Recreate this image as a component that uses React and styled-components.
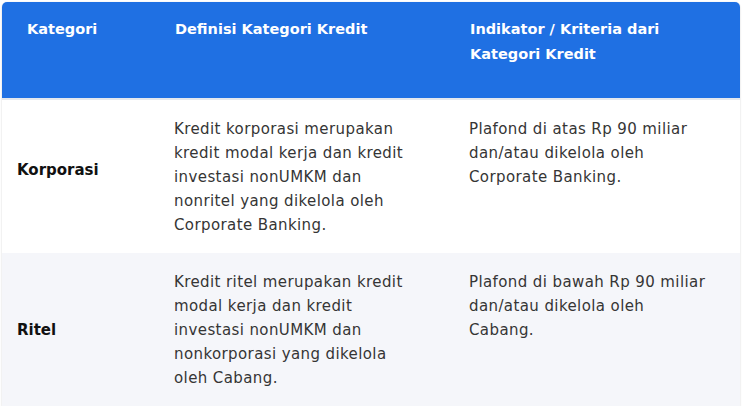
import React from "react";
import styled, { createGlobalStyle } from "styled-components";

const GlobalStyle = createGlobalStyle`
  body {
    margin: 0;
    background: #ffffff;
    font-family: "DejaVu Sans", "Open Sans", sans-serif;
  }
  *, *::before, *::after {
    box-sizing: border-box;
  }
`;

const Page = styled.div`
  padding: 2px 5px 0 2px;
`;

const Card = styled.div`
  border-radius: 5px 5px 0 0;
  overflow: hidden;
  box-shadow: 0 1px 2px rgba(0, 0, 0, 0.16), 0 0 1px rgba(0, 0, 0, 0.12);
`;

const Table = styled.table`
  width: 100%;
  border-collapse: collapse;
  table-layout: fixed;
`;

const HeadCell = styled.th`
  background: #1f70e3;
  color: #ffffff;
  font-size: 14.5px;
  font-weight: 700;
  line-height: 25px;
  text-align: left;
  vertical-align: top;
  padding: 15px 24px 31px 25px;
  width: ${p => p.$width || "auto"};
  border-bottom: 2px solid #e4e8ee;
`;

const Row = styled.tr`
  background: ${p => (p.$shaded ? "#f5f6fa" : "#ffffff")};
`;

const Label = styled.td`
  font-size: 15px;
  font-weight: 700;
  color: #111111;
  vertical-align: middle;
  padding: 17px 24px ${p => (p.$raise ? "31px" : "16px")} 15px;
`;

const Text = styled.td`
  font-size: 15px;
  letter-spacing: 0.4px;
  color: #353535;
  line-height: 24px;
  vertical-align: top;
  padding: 17px 30px 16px 24px;
`;

const rows = [
  {
    name: "Korporasi",
    raise: true,
    definition:
      "Kredit korporasi merupakan kredit modal kerja dan kredit investasi nonUMKM dan nonritel yang dikelola oleh Corporate Banking.",
    criteria:
      "Plafond di atas Rp 90 miliar dan/atau dikelola oleh Corporate Banking.",
  },
  {
    name: "Ritel",
    shaded: true,
    definition:
      "Kredit ritel merupakan kredit modal kerja dan kredit investasi nonUMKM dan nonkorporasi yang dikelola oleh Cabang.",
    criteria:
      "Plafond di bawah Rp 90 miliar dan/atau dikelola oleh Cabang.",
  },
];

export default function App() {
  return (
    <Page>
      <GlobalStyle />
      <Card>
        <Table>
          <thead>
            <tr>
              <HeadCell $width="148px">Kategori</HeadCell>
              <HeadCell>Definisi Kategori Kredit</HeadCell>
              <HeadCell>Indikator / Kriteria dari Kategori Kredit</HeadCell>
            </tr>
          </thead>
          <tbody>
            {rows.map(r => (
              <Row key={r.name} $shaded={r.shaded}>
                <Label $raise={r.raise}>{r.name}</Label>
                <Text>{r.definition}</Text>
                <Text>{r.criteria}</Text>
              </Row>
            ))}
          </tbody>
        </Table>
      </Card>
    </Page>
  );
}
